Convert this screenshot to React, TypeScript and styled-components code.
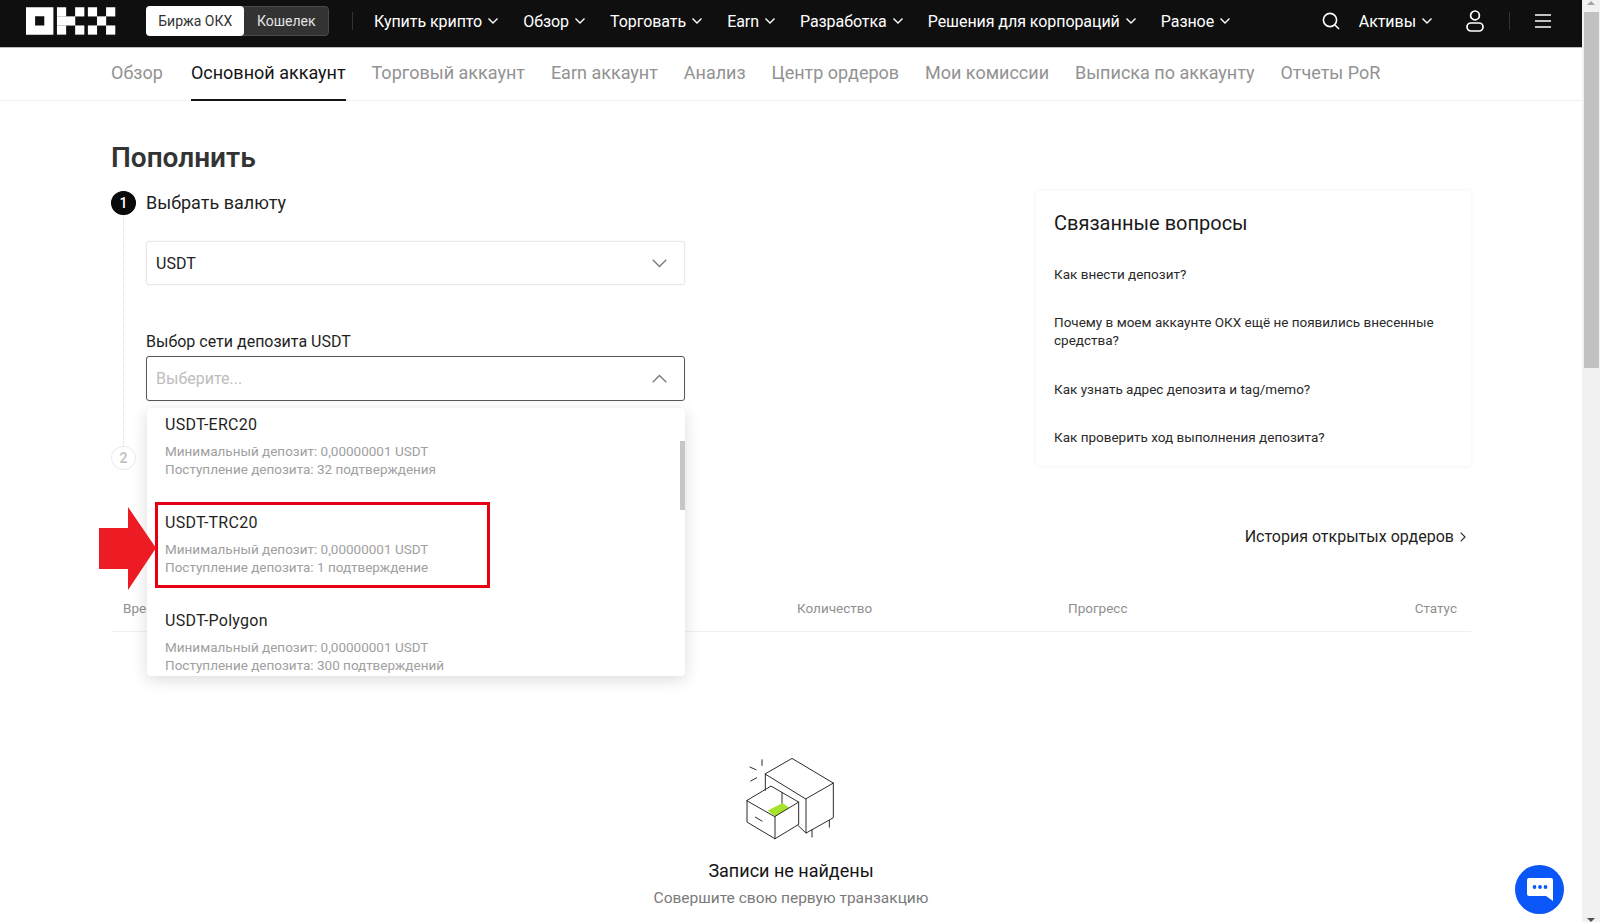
import React from "react";
import styled, { createGlobalStyle } from "styled-components";

const Global = createGlobalStyle`
  html, body { margin: 0; padding: 0; height: 100%; overflow: hidden; background: #fff; }
  * { box-sizing: border-box; }
  body { font-family: Roboto, "Noto Sans", "Liberation Sans", sans-serif; color: #1f1f1f; }
`;

const Shell = styled.div`
  display: flex;
  width: 1600px;
  height: 922px;
  overflow: hidden;
`;
const Page = styled.div`
  position: relative;
  flex: 1;
  min-width: 0;
  display: flex;
  flex-direction: column;
  overflow: hidden;
`;
const ScrollRail = styled.div`
  width: 18px;
  background: #f1f1f1;
  display: flex;
  flex-direction: column;
  align-items: center;
  justify-content: space-between;
  padding-top: 1px;
`;
const ScrollThumb = styled.div`
  width: 15px;
  height: 356px;
  margin-top: 7px;
  background: #c1c1c1;
`;
const ScrollTop = styled.div`
  display: flex;
  flex-direction: column;
  align-items: center;
`;
const Triangle = styled.div<{ $down?: boolean }>`
  width: 0;
  height: 0;
  border-left: 4px solid transparent;
  border-right: 4px solid transparent;
  ${(p) => (p.$down ? "border-top: 4px solid #505050;" : "border-bottom: 4px solid #a3a3a3;")}
`;

const TopBar = styled.header`
  height: 48px;
  flex: none;
  background: #0f0f0f;
  border-bottom: 1px solid #bdbdbd;
  display: flex;
  align-items: center;
  padding: 0 31px 5px 26px;
  color: #fff;
`;
const Switcher = styled.div`
  display: flex;
  width: 183px;
  height: 30px;
  margin-left: 30px;
  border-radius: 4px;
  background: #333;
  border: 1px solid #4a4a4a;
  font-size: 14px;
`;
const SwitchItem = styled.div<{ $on?: boolean }>`
  display: flex;
  align-items: center;
  justify-content: center;
  width: ${(p) => (p.$on ? "99px" : "84px")};
  margin: ${(p) => (p.$on ? "-1px 0 -1px -1px" : "0")};
  border-radius: 4px;
  background: ${(p) => (p.$on ? "#fff" : "transparent")};
  color: ${(p) => (p.$on ? "#333" : "#e4e4e4")};
`;
const BarDivider = styled.div`
  width: 1px;
  height: 18px;
  background: #333;
`;
const NavList = styled.nav`
  display: flex;
  align-items: center;
  gap: 25px;
  margin-left: 21px;
`;
const NavItem = styled.div`
  display: flex;
  align-items: center;
  gap: 6px;
  font-size: 16px;
  letter-spacing: -0.06px;
  white-space: nowrap;
`;
const BarRight = styled.div`
  margin-left: auto;
  display: flex;
  align-items: center;
`;
const Tabs = styled.div`
  height: 53px;
  flex: none;
  border-bottom: 1px solid #f0f0f0;
  padding-left: 111px;
  display: flex;
  gap: 25.9px;
`;
const Tab = styled.div<{ $on?: boolean }>`
  display: flex;
  align-items: center;
  min-width: 54px;
  height: 53px;
  padding-bottom: 2px;
  font-size: 18px;
  white-space: nowrap;
  color: ${(p) => (p.$on ? "#141414" : "#929292")};
  border-bottom: 2px solid ${(p) => (p.$on ? "#141414" : "transparent")};
`;
const Main = styled.main`
  padding: 39px 111px 0;
`;
const Title = styled.h1`
  margin: 0;
  font-size: 28px;
  line-height: 36px;
  font-weight: 600;
  color: #333;
`;
const Columns = styled.div`
  display: flex;
  justify-content: space-between;
  align-items: flex-start;
  margin-top: 15px;
`;
const FormColumn = styled.div`
  width: 574px;
`;
const Step = styled.section`
  display: grid;
  grid-template-columns: 25px 1fr;
  column-gap: 10px;
`;
const StepRail = styled.div`
  display: flex;
  flex-direction: column;
  align-items: center;
`;
const StepDot = styled.div<{ $on?: boolean }>`
  width: 25px;
  height: 24px;
  flex: none;
  border-radius: 50%;
  display: flex;
  align-items: center;
  justify-content: center;
  font-size: 14px;
  font-weight: 500;
  background: ${(p) => (p.$on ? "#0a0a0a" : "#fff")};
  color: ${(p) => (p.$on ? "#fff" : "#bdbdbd")};
  border: 1px solid ${(p) => (p.$on ? "#0a0a0a" : "#ececec")};
`;
const StepLine = styled.div`
  flex: 1;
  width: 0;
  border-left: 1px dotted #d8d8d8;
`;
const StepBody = styled.div`
  min-width: 0;
  padding-bottom: 45px;
`;
const StepLabel = styled.div`
  font-size: 18px;
  line-height: 24px;
  color: #1f1f1f;
`;
const Select = styled.div<{ $open?: boolean }>`
  height: ${(p) => (p.$open ? "45px" : "44px")};
  display: flex;
  align-items: center;
  justify-content: space-between;
  padding: 0 17px 0 9px;
  border: 1px solid ${(p) => (p.$open ? "#55585c" : "#e9e9e9")};
  border-radius: 3px;
  font-size: 16px;
  color: #222;
  background: #fff;
  box-shadow: 0 0 2px rgba(0, 0, 0, 0.08);
`;
const FirstSelect = styled(Select)`
  margin-top: 26px;
`;
const Placeholder = styled.span`
  color: #bdbdbd;
`;
const FieldLabel = styled.div`
  margin-top: 47px;
  margin-bottom: 4px;
  font-size: 16px;
  line-height: 20px;
  color: #1f1f1f;
`;
const SelectWrap = styled.div`
  position: relative;
`;
const Dropdown = styled.div`
  position: absolute;
  z-index: 5;
  left: 1px;
  right: 0;
  top: 52px;
  height: 268px;
  background: #fff;
  border-radius: 4px;
  box-shadow: 0 4px 16px rgba(0, 0, 0, 0.14);
`;
const OptionList = styled.div`
  height: 100%;
  overflow: hidden;
  border-radius: 4px;
`;
const Option = styled.div<{ $marked?: boolean }>`
  position: relative;
  height: 98px;
  padding: 6px 0 0 18px;
  ${(p) =>
    p.$marked &&
    `&::after {
      content: "";
      box-sizing: border-box;
      position: absolute;
      left: 8px;
      top: -4px;
      width: 335px;
      height: 86px;
      border: 3px solid #e60012;
    }`}
`;
const OptionTitle = styled.div`
  font-size: 16px;
  line-height: 22px;
  letter-spacing: 0.25px;
  margin-bottom: 6px;
  color: #1f1f1f;
`;
const OptionNote = styled.div`
  font-size: 13.5px;
  line-height: 18px;
  color: #a0a0a0;
`;
const DropScroll = styled.div`
  position: absolute;
  right: 0;
  top: 33px;
  width: 5px;
  height: 69px;
  background: #c6c6c6;
`;
const RedArrow = styled.svg`
  position: absolute;
  left: -48px;
  top: 99px;
  z-index: 6;
`;
const Card = styled.aside`
  width: 435px;
  height: 275px;
  padding: 18px 18px 0 18px;
  border-radius: 3px;
  box-shadow: 0 0 4px rgba(0, 0, 0, 0.07);
`;
const CardTitle = styled.h2`
  margin: 0 0 28px;
  font-size: 20px;
  line-height: 28px;
  font-weight: 400;
  color: #1a1a1a;
`;
const CardLink = styled.div`
  font-size: 13.5px;
  line-height: 18px;
  color: #2a2a2a;
  & + & {
    margin-top: 30.4px;
  }
`;
const HistoryRow = styled.div`
  display: flex;
  justify-content: flex-end;
  align-items: center;
  gap: 6px;
  margin-top: 56px;
  padding-right: 5px;
  font-size: 16px;
  line-height: 22px;
  color: #1f1f1f;
`;
const TableHead = styled.div`
  display: grid;
  grid-template-columns: 674px 271px 1fr auto;
  margin-top: 50px;
  padding: 0 14px 13px 12px;
  border-bottom: 1px solid #efefef;
  font-size: 13.5px;
  line-height: 20px;
  color: #909090;
`;
const Empty = styled.div`
  display: flex;
  flex-direction: column;
  align-items: center;
  margin-top: 125px;
`;
const EmptyTitle = styled.div`
  margin-top: 18px;
  font-size: 18px;
  line-height: 24px;
  color: #141414;
`;
const EmptyNote = styled.div`
  margin-top: 4px;
  font-size: 15.5px;
  line-height: 22px;
  color: #7a7a7a;
`;
const ChatButton = styled.button`
  position: absolute;
  left: 1515px;
  top: 865px;
  width: 49px;
  height: 49px;
  border: 0;
  padding: 0;
  border-radius: 50%;
  background: #0a56f6;
  display: flex;
  align-items: center;
  justify-content: center;
`;
const IconSpacer = styled.div<{ $w: number }>`
  width: ${(p) => p.$w}px;
  flex: none;
`;

const Chevron = ({ size = 10, up = false, color = "currentColor", w = 1.4 }: { size?: number; up?: boolean; color?: string; w?: number }) => (
  <svg width={size} height={size * 0.6} viewBox="0 0 10 6" fill="none" stroke={color} strokeWidth={w * (10 / size)}>
    <path d={up ? "M.5 5.5 5 1l4.5 4.5" : "M.5.5 5 5 9.5.5"} />
  </svg>
);

const Logo = () => {
  const c = 9.1;
  const cells: [number, number][] = [
    [3.4, 0], [3.4, 1], [3.4, 2], [4.4, 1], [5.4, 0], [5.4, 2],
    [6.8, 0], [6.8, 2], [7.8, 1], [8.8, 0], [8.8, 2],
  ];
  return (
    <svg width="90" height="28" viewBox="0 0 90 27.5">
      <path fill="#fff" fillRule="evenodd" d="M0 0h27.4v27.4H0z M9.1 9.1v9.2h9.2V9.1z" />
      {cells.map(([x, y]) => (
        <rect key={`${x}-${y}`} x={x * c} y={y * c} width={c + 0.1} height={c + 0.1} fill="#fff" />
      ))}
    </svg>
  );
};

const navItems = ["Купить крипто", "Обзор", "Торговать", "Earn", "Разработка", "Решения для корпораций", "Разное"];
const tabs = ["Обзор", "Основной аккаунт", "Торговый аккаунт", "Earn аккаунт", "Анализ", "Центр ордеров", "Мои комиссии", "Выписка по аккаунту", "Отчеты PoR"];
const options = [
  { name: "USDT-ERC20", note: "Поступление депозита: 32 подтверждения" },
  { name: "USDT-TRC20", note: "Поступление депозита: 1 подтверждение", marked: true },
  { name: "USDT-Polygon", note: "Поступление депозита: 300 подтверждений" },
];
const questions = [
  "Как внести депозит?",
  "Почему в моем аккаунте ОКХ ещё не появились внесенные средства?",
  "Как узнать адрес депозита и tag/memo?",
  "Как проверить ход выполнения депозита?",
];

const Drawer = () => (
  <svg width="90" height="83.5" viewBox="320 80 270 250" fill="none" stroke="#2b2b2b" strokeWidth="3" strokeLinejoin="round" strokeLinecap="round">
    <path d="M378 130 458 84l124 74-82 47z" />
    <path d="M582 158v104l-82 46V205M378 130v50M476 285l24 23M570 270v20M518 298v22" />
    <path d="M428 186v34" />
    <path d="M385 240l45-22 20 14-43 26z" fill="#a6e22e" stroke="none" />
    <path d="M323 210l72-43 83 48-71 43z" />
    <path d="M323 210v65l84 50v-67M407 325l71-43v-67M348 260l20 12" />
    <path d="M368 88v17M332 110l18 8M334 152l18-10" />
  </svg>
);

export default function App() {
  return (
    <Shell>
      <Global />
      <Page>
        <TopBar>
          <Logo />
          <Switcher>
            <SwitchItem $on>Биржа ОКХ</SwitchItem>
            <SwitchItem>Кошелек</SwitchItem>
          </Switcher>
          <IconSpacer $w={23} />
          <BarDivider />
          <NavList>
            {navItems.map((n) => (
              <NavItem key={n}>
                {n}
                <Chevron />
              </NavItem>
            ))}
          </NavList>
          <BarRight>
            <svg width="18" height="18" viewBox="0 0 18 18" fill="none" stroke="#fff" strokeWidth="1.6">
              <circle cx="8" cy="8" r="6.6" />
              <path d="M13 13l4 4" />
            </svg>
            <IconSpacer $w={19} />
            <NavItem>
              Активы
              <Chevron />
            </NavItem>
            <IconSpacer $w={34} />
            <svg width="18" height="22" viewBox="0 0 18 22" fill="none" stroke="#fff" strokeWidth="1.7">
              <circle cx="9" cy="5.4" r="4.4" />
              <rect x="1" y="13" width="16" height="8" rx="4" />
            </svg>
            <IconSpacer $w={25} />
            <BarDivider />
            <IconSpacer $w={25} />
            <svg width="16" height="14" viewBox="0 0 16 14" stroke="#fff" strokeWidth="1.6">
              <path d="M0 1h16M0 7h16M0 13h16" />
            </svg>
          </BarRight>
        </TopBar>
        <Tabs>
          {tabs.map((t) => (
            <Tab key={t} $on={t === "Основной аккаунт"}>
              {t}
            </Tab>
          ))}
        </Tabs>
        <Main>
          <Title>Пополнить</Title>
          <Columns>
            <FormColumn>
              <Step>
                <StepRail>
                  <StepDot $on>1</StepDot>
                  <StepLine />
                </StepRail>
                <StepBody>
                  <StepLabel>Выбрать валюту</StepLabel>
                  <FirstSelect>
                    USDT
                    <Chevron size={15} color="#777" w={1.4} />
                  </FirstSelect>
                  <FieldLabel>Выбор сети депозита USDT</FieldLabel>
                  <SelectWrap>
                    <Select $open>
                      <Placeholder>Выберите...</Placeholder>
                      <Chevron size={15} up color="#777" w={1.4} />
                    </Select>
                    <Dropdown>
                      <OptionList>
                        {options.map((o) => (
                          <Option key={o.name} $marked={o.marked}>
                            <OptionTitle>{o.name}</OptionTitle>
                            <OptionNote>Минимальный депозит: 0,00000001 USDT</OptionNote>
                            <OptionNote>{o.note}</OptionNote>
                          </Option>
                        ))}
                      </OptionList>
                      <DropScroll />
                      <RedArrow width="57" height="83" viewBox="0 0 57 83">
                        <path d="M0 21h29V0l28 41-28 42V62H0z" fill="#ed1c24" />
                      </RedArrow>
                    </Dropdown>
                  </SelectWrap>
                </StepBody>
              </Step>
              <Step>
                <StepRail>
                  <StepDot>2</StepDot>
                </StepRail>
              </Step>
            </FormColumn>
            <Card>
              <CardTitle>Связанные вопросы</CardTitle>
              {questions.map((q) => (
                <CardLink key={q}>{q}</CardLink>
              ))}
            </Card>
          </Columns>
          <HistoryRow>
            История открытых ордеров
            <svg width="6" height="10" viewBox="0 0 6 10" fill="none" stroke="#333" strokeWidth="1.2">
              <path d="M.7.7 5 5 .7 9.3" />
            </svg>
          </HistoryRow>
          <TableHead>
            <span>Время</span>
            <span>Количество</span>
            <span>Прогресс</span>
            <span>Статус</span>
          </TableHead>
          <Empty>
            <Drawer />
            <EmptyTitle>Записи не найдены</EmptyTitle>
            <EmptyNote>Совершите свою первую транзакцию</EmptyNote>
          </Empty>
        </Main>
        <ChatButton aria-label="Чат">
          <svg width="26" height="24" viewBox="0 0 26 24">
            <path d="M2 0h22a2 2 0 0 1 2 2v21l-7-5H2a2 2 0 0 1-2-2V2a2 2 0 0 1 2-2z" fill="#fff" />
            <circle cx="7.5" cy="9" r="1.9" fill="#0a56f6" />
            <circle cx="13" cy="9" r="1.9" fill="#0a56f6" />
            <circle cx="18.5" cy="9" r="1.9" fill="#0a56f6" />
          </svg>
        </ChatButton>
      </Page>
      <ScrollRail>
        <ScrollTop>
          <Triangle />
          <ScrollThumb />
        </ScrollTop>
        <Triangle $down />
      </ScrollRail>
    </Shell>
  );
}
